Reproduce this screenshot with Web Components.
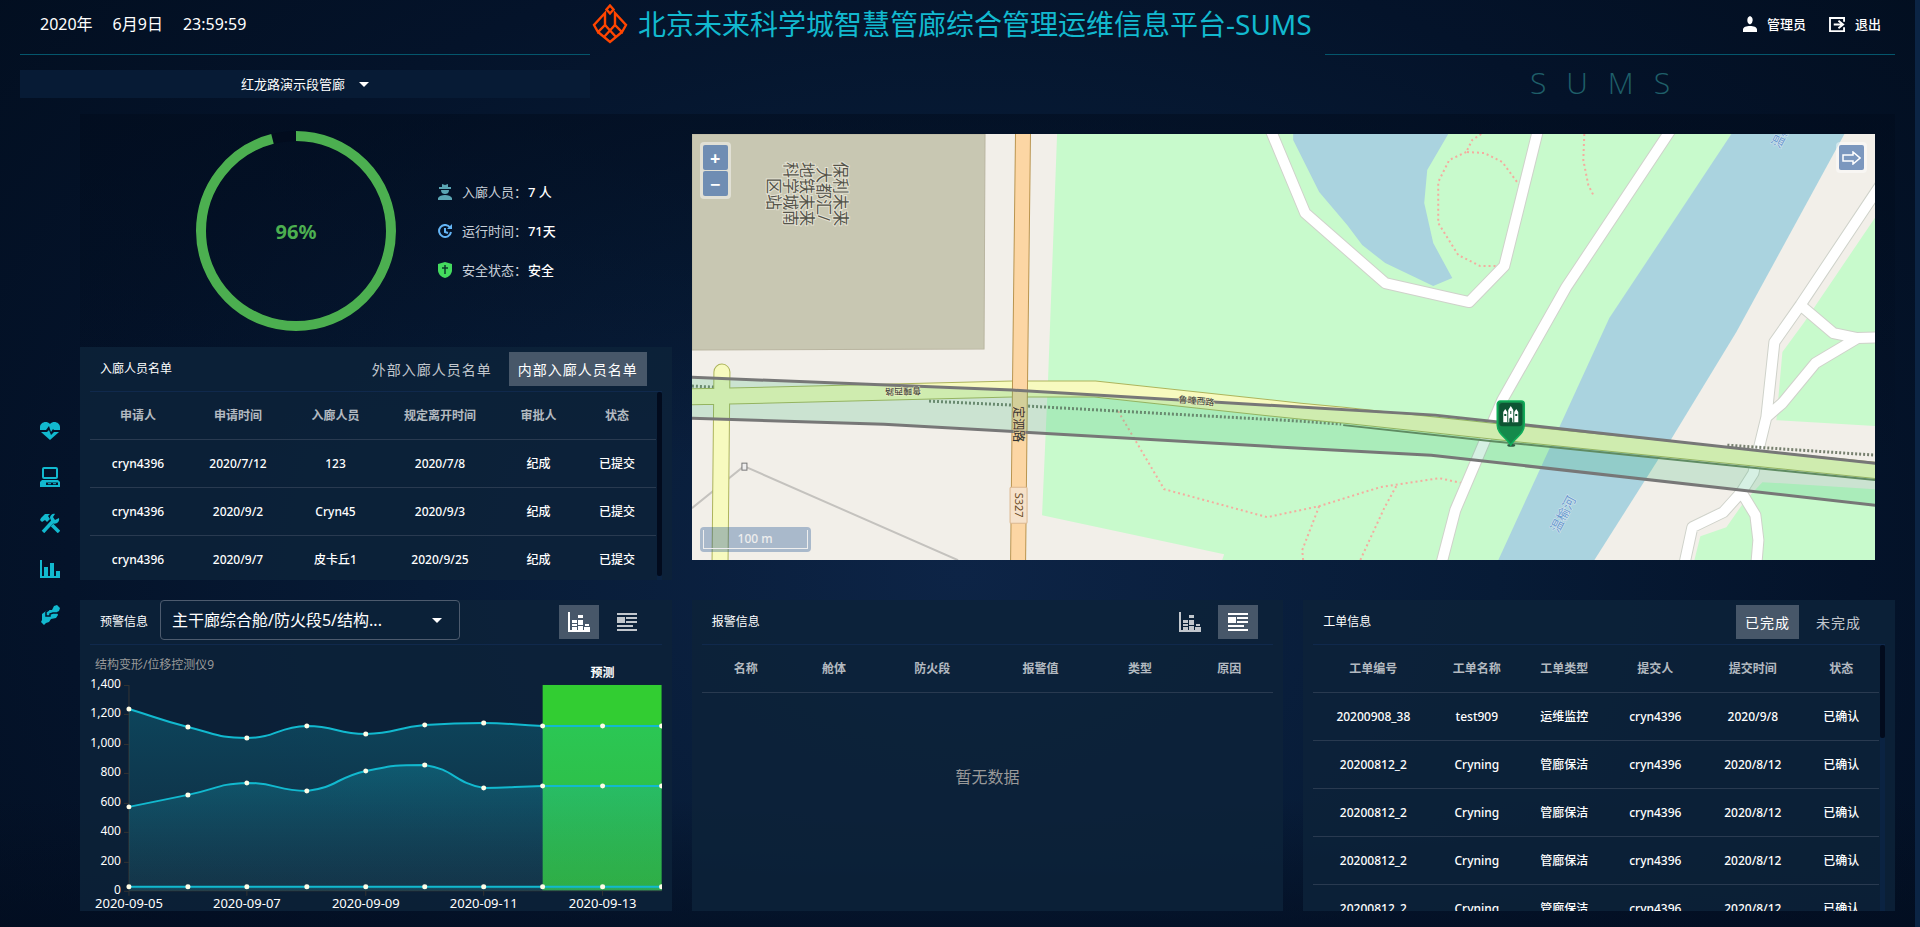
<!DOCTYPE html>
<html lang="zh-CN">
<head>
<meta charset="utf-8">
<title>北京未来科学城智慧管廊综合管理运维信息平台-SUMS</title>
<style>
html, body { margin: 0; min-height: 100%; background: #04132a; }
body { font-family: "Noto Sans", "Noto Sans CJK SC", sans-serif; font-size: 12px; color: #fff; }
</style>
</head>
<body>
<sums-app></sums-app>
<script>
const ICONS = {
  user: ['0 0 16 16', '<path fill="currentColor" d="M8 0a4 4.500 0 0 1 0 8.500A4 4.500 0 0 1 8 0zM1 16v-2.500C1 11 4.500 10 8 10s7 1 7 3.500V16z"/>'],
  exit: ['0 0 18 16', '<path fill="none" stroke="currentColor" stroke-width="2" d="M16 5V1H1v14h15v-4"/><path fill="none" stroke="currentColor" stroke-width="2" d="M5 8h10M10 4l5 4-5 4"/>'],
  heart: ['0 0 20 18', '<path fill="currentColor" d="M0 8V5C0 1 6-2 10 2c4-4 10-1 10 3v3h-6l-1-1-2 3-2-6-3 4zM1 10h6l2-2 2 5 3-3h5l-9 8z"/>'],
  computer: ['0 0 20 20', '<rect x="3" y="1" width="14" height="10" rx="1" fill="none" stroke="currentColor" stroke-width="2"/><path fill="currentColor" fill-rule="evenodd" d="M2 13h16l2 2v5H0v-5zM6 15.500v2.500h12v-2.500z"/><path stroke="currentColor" d="M8 16.700h3M13 16.700h3"/>'],
  tools: ['0 0 20 20', '<path fill="none" stroke="currentColor" stroke-width="3.500" d="M3 19L14 7"/><path fill="currentColor" d="M10 5c0-3 3-5 5-4l-2 3 2 3 4-2c1 4-3 7-7 5zM1 5l4-4h5L8 3l2 3-3 3-2-2-3 2-2-2z"/><path stroke="currentColor" stroke-width="3.500" d="M12 12l7 7"/>'],
  bars: ['0 0 20 18', '<path fill="currentColor" d="M0 0h2v16h2V7h4v9h2V3h4v13h2v-5h4v7H0z"/>'],
  plug: ['0 0 20 20', '<path fill="currentColor" d="M14 1l3-1 3 3-1 3-2 1 1 3-2 3-5 1-2 3-3 1-2 2-3-3 1-2V9l4-3 3-1h3z"/><path fill="none" stroke="#04132a" stroke-width="1.500" d="M9 5L6 7v4h4V9l3-1 5 0"/>'],
  worker: ['0 0 14 16', '<path fill="#5ba6b4" d="M4 0l3 1 3-1v3h3v2H1V3h3zM3 6h8c0 3-2 4-4 4S3 9 3 6zM0 16v-2c1-2 4-3 7-3s6 1 7 3v2z"/>'],
  clock: ['0 0 14 14', '<path fill="none" stroke="#64b5f6" stroke-width="2" d="M12 3.500A6 6 0 1 0 13 8M7 4v4l3 1"/><path fill="#64b5f6" d="M14 0v5H9z"/>'],
  shield: ['0 0 14 16', '<path fill="#44db5e" d="M7 0l7 2v6c0 4-3 7-7 8-4-1-7-4-7-8V2z"/><path stroke="#0b3a2c" stroke-width="1.500" d="M7 3v9M4 6h6"/>'],
  stack: ['0 0 22 20', '<path fill="currentColor" d="M0 0h2v18h20v2H0zM4 8h5v3H4zM4 12h5v2H4zM4 15h5v3H4zM10 3h5v3h-5zM10 8h5v5h-5zM10 14h5v4h-5zM17 12h4v2h-4zM16 15h6v3h-6z"/>'],
  news: ['0 0 20 18', '<path fill="currentColor" d="M0 0h20v2H0zM0 4h8v6H0zM9 4h11v2H9zM9 8h11v2H9zM0 12h16v2H0zM0 16h20v2H0z"/>'],
  caret: ['0 0 10 5', '<path fill="currentColor" d="M0 0h10L5 5z"/>'],
  logo: ['0 0 36 40', '<g fill="none" stroke="#ff4500" stroke-width="2.400"><path d="M18 1.500l3.500 4-3.500 4-3.500-4z"/><path d="M13 9L2 21l4 7 7-7zM23 9l11 12-4 7-7-7z"/><path d="M13 21l11 12M23 21L12 33M6 28l12 10 12-10M18 27"/></g>']
};

/* Shared base: fills an open shadow root with styles and markup. */
class Base extends HTMLElement {
  constructor() { super(); this.attachShadow({ mode: 'open' }); }
  connectedCallback() {
    const t = document.createElement('template');
    t.innerHTML = `<style>*{box-sizing:border-box}:host{display:block;box-sizing:border-box}${this.css()}</style>${this.html()}`;
    this.shadowRoot.replaceChildren(t.content.cloneNode(true));
  }
  css() { return ''; }
  html() { return '<slot></slot>'; }
}

class UiIcon extends Base {
  css() {
    return `:host{display:inline-flex;flex:none}svg{display:block;width:${this.getAttribute('w')}px;height:${this.getAttribute('h')}px}`;
  }
  html() {
    const [box, body] = ICONS[this.getAttribute('name')];
    return `<svg viewBox="${box}" aria-hidden="true">${body}</svg>`;
  }
}
customElements.define('ui-icon', UiIcon);

/* Toggle button: text tab, or icon when a label is given. */
class TabButton extends Base {
  css() {
    return `button{display:flex;align-items:center;justify-content:center;height:34px;min-width:40px;padding:0 9px;margin:0;border:0;
        background:transparent;color:rgba(255,255,255,.75);font:inherit;font-size:14px;letter-spacing:1px;white-space:nowrap}
      :host([active]) button{background:#475769;color:#fff}`;
  }
  html() {
    const on = this.hasAttribute('active');
    const label = this.getAttribute('label');
    return `<button type="button" aria-pressed="${on}" ${label ? `aria-label="${label}"` : ''}><slot></slot></button>`;
  }
}
customElements.define('tab-button', TabButton);

class InfoPanel extends Base {
  css() {
    return `:host{display:flex;flex-direction:column;min-width:0;min-height:0;overflow:hidden;background:rgba(12,34,57,.88)}
      header{display:flex;align-items:center;flex:none;height:45px;margin:0 10px;padding:0 15px 0 10px;border-bottom:1px solid #10294c}
      h2{margin:0;font-size:12px;font-weight:400;line-height:20px}
      .lead{flex:1;align-self:flex-start;padding-left:12px}
      .tools{display:flex;gap:8px}
      .body{flex:1;min-height:0;margin:0 10px;display:flex;flex-direction:column}`;
  }
  html() {
    return `<header><h2>${this.getAttribute('heading')}</h2><div class="lead"><slot name="lead"></slot></div><div class="tools"><slot name="tools"></slot></div></header><div class="body"><slot></slot></div>`;
  }
}
customElements.define('info-panel', InfoPanel);

class DataTable extends Base {
  css() {
    return `:host{display:flex;flex:1;min-height:0;overflow:hidden}
      .view{flex:1;overflow:hidden}
      table{width:100%;table-layout:fixed;border-collapse:separate;border-spacing:0}
      th,td{height:48px;padding:0;text-align:center;font-size:12px;font-weight:500;line-height:18px;border-bottom:1px solid #293a50;white-space:nowrap}
      th{font-weight:600;color:rgba(255,255,255,.7)}
      .track{flex:none;width:5px;margin-left:1px;background:#0b2342}
      .thumb{background:#020b1d;border-radius:2px;height:${this.getAttribute('thumb') || 0}%}
      .empty{margin:0;padding-top:72px;text-align:center;font-size:16px;line-height:24px;color:#999}`;
  }
  html() {
    const get = n => JSON.parse(this.getAttribute(n) || '[]');
    const rows = get('rows');
    return `<div class="view"><table><colgroup>${get('widths').map(w => `<col style="width:${w}px">`).join('')}</colgroup>
      <thead><tr>${get('cols').map(c => `<th scope="col">${c}</th>`).join('')}</tr></thead>
      <tbody>${rows.map(r => `<tr>${r.map(c => `<td>${c}</td>`).join('')}</tr>`).join('')}</tbody></table>
      ${rows.length ? '' : '<p class="empty">暂无数据</p>'}</div>
      ${this.hasAttribute('thumb') ? '<div class="track"><div class="thumb"></div></div>' : ''}`;
  }
}
customElements.define('data-table', DataTable);

class DateBar extends Base {
  css() { return ':host{display:flex;gap:20px;align-items:center;font-size:16px;line-height:24px}'; }
  html() { return '<span>2020年</span><span>6月9日</span><time>23:59:59</time>'; }
}
customElements.define('date-bar', DateBar);

class AppHeader extends Base {
  css() {
    return `:host{display:grid;grid-template-columns:570fr 735fr 570fr}
      .bar{display:flex;align-items:center;height:55px;padding:0 20px 6px;border-bottom:1px solid #04566c}
      .right{justify-content:flex-end;padding-right:14px;gap:23px;font-size:13px}
      .right a{display:flex;align-items:center;gap:9px;color:#fff;text-decoration:none;font-weight:500;line-height:18px}
      .title{display:flex;align-items:center;gap:10px;height:48px;padding-left:2px;color:#12b9cf}
      h1{margin:0;font-size:28px;font-weight:400;line-height:40px;white-space:nowrap}
      .pick{display:flex;align-items:center;justify-content:center;gap:13px;height:28px;margin-top:15px;background:#071b35}
      select{appearance:none;border:0;margin:0;padding:0;background:transparent;color:#fff;font:inherit;font-size:13px;line-height:20px}
      .mark{margin:8px 0 0;text-align:center;font-family:"Open Sans","Noto Sans",sans-serif;font-size:30px;font-weight:300;line-height:40px;letter-spacing:20px;color:#1f5f69;height:35px}`;
  }
  html() {
    return `<div><div class="bar"><date-bar></date-bar></div>
        <div class="pick"><select aria-label="管廊"><option>红龙路演示段管廊</option></select><ui-icon name="caret" w="10" h="5"></ui-icon></div></div>
      <div class="title"><ui-icon name="logo" w="36" h="40"></ui-icon><h1>北京未来科学城智慧管廊综合管理运维信息平台-SUMS</h1></div>
      <div><div class="bar right"><a href="#user"><ui-icon name="user" w="16" h="16"></ui-icon>管理员</a><a href="#exit"><ui-icon name="exit" w="17" h="15"></ui-icon>退出</a></div>
        <p class="mark">SUMS</p></div>`;
  }
}
customElements.define('app-header', AppHeader);

class SideNav extends Base {
  css() { return `nav{display:flex;flex-direction:column;align-items:center;padding-top:307px;gap:26px}a{display:flex;align-items:center;justify-content:center;width:20px;height:20px;color:#12b9cf}`; }
  html() {
    return `<nav>${[['heart', 18, '健康监测'], ['computer', 20, '设备'], ['tools', 20, '运维'], ['bars', 18, '统计'], ['plug', 20, '应急']]
      .map(([n, h, l]) => `<a href="#${n}" aria-label="${l}"><ui-icon name="${n}" w="20" h="${h}"></ui-icon></a>`).join('')}</nav>`;
  }
}
customElements.define('side-nav', SideNav);

class StatusCard extends Base {
  css() {
    return `:host{display:flex;align-items:center;justify-content:center;gap:42px}
      svg{display:block;width:200px;height:200px}
      dl{margin:0}
      dl div{display:flex;align-items:center;height:39px;font-size:13px;line-height:20px}
      ui-icon{width:15px;margin-right:9px}
      dt{color:#c9d0d9}dd{margin:0 0 0 1px;font-weight:500}`;
  }
  html() {
    const row = (i, h, k, v) => `<div><ui-icon name="${i}" w="14" h="${h}"></ui-icon><dt>${k}：</dt><dd>${v}</dd></div>`;
    return `<svg viewBox="0 0 200 200" role="img" aria-label="96%">
        <circle cx="100" cy="100" r="95" fill="none" stroke="#020c1e" stroke-width="10"/>
        <circle cx="100" cy="100" r="95" fill="none" stroke="#4caf50" stroke-width="10" pathLength="100" stroke-dasharray="96 4" transform="rotate(-90 100 100)"/>
        <text x="100" y="108" text-anchor="middle" font-size="20" font-weight="700" fill="#4caf50">96%</text></svg>
      <dl>${row('worker', 16, '入廊人员', '7 人')}${row('clock', 14, '运行时间', '71天')}${row('shield', 16, '安全状态', '安全')}</dl>`;
  }
}
customElements.define('status-card', StatusCard);

class SiteMap extends Base {
  css() {
    return `:host{position:relative;overflow:hidden;background:#f2efe9}
      svg.map{position:absolute;inset:0;width:100%;height:100%;display:block}
      .ctl{position:absolute;top:8px;padding:3px;border-radius:4px;background:rgba(255,255,255,.45);display:grid;gap:1px}
      .zoom{left:8px}.over{right:8px}
      button{display:flex;align-items:center;justify-content:center;width:25px;height:25px;margin:0;padding:0;border:0;border-radius:2px;background:#6f8db3;color:#fff;font:inherit;font-size:18px;font-weight:700;line-height:20px}
      .over button{background:#7b97be}
      .scale{position:absolute;left:8px;bottom:8px;padding:3px;width:111px;border-radius:4px;background:rgba(0,60,136,.3)}
      .scale div{height:19px;border:1px solid #eee;border-top:0;color:#eee;text-align:center;font-size:12px;font-weight:500;line-height:18px}`;
  }
  html() {
    const yellow = 'M-15 263L37 262 320 255 403 255 608 277 651 281 800 297 1190 337M30 238L28 440';
    const roads = ['M578-5L588 19 613 79 693 149 759 164 777 168 812 132 846-5',
      'M979-5L874 153 810 266 792 308 763 376 749 430',
      'M1190 48L1108 171 1082 208 1074 283 1066 316 1061 339 1049 358 1031 378 1000 393 992 430',
      'M1049 358L1063 381 1066 406 1064 430', 'M1108 171L1141 199 1165 204 1190 203', 'M1165 204L1123 229 1090 269 1074 283'].join('');
    return `<svg class="map" viewBox="0 0 1183 426" preserveAspectRatio="xMidYMid slice" role="img" aria-label="地图">
      <rect width="1183" height="426" fill="#f2efe9"/>
      <path d="M0 0H293L292 215 0 216z" fill="#c8c7b2" stroke="#b9b5a0"/>
      <path d="M365 0H1100L980 303 900 426H530L532 420 350 381 356 245z" fill="#c8facc"/>
      <path d="M1152 0H1183V426H902L980 303 1044 198z" fill="#f2efe9"/>
      <path d="M1183 83L1112 188 1090 218 1084 286 1183 292zM1070 348L1183 355V426H1002L1008 402 1034 393 1053 366z" fill="#c8facc"/>
      <path d="M1039 0H1152L1044 198 980 303 902 426H806L867 293 917 184z" fill="#aad3df"/>
      <path d="M601 0V6L627 58 655 91 670 111 693 129 741 152 760 144 741 109 732 69 735 36 756 0z" fill="#aad3df"/>
      <path d="M0 374L52 332 266 426" fill="none" stroke="#c4c2be" stroke-width="2"/>
      <rect x="50" y="329" width="5" height="7" fill="#eee" stroke="#777"/>
      <g fill="none" stroke="#f4ac9f" stroke-width="2" stroke-dasharray="2 3">
        <path d="M426 277L472 355 575 383 627 372 688 353 747 344 770 349M704 352L692 374 668 426M627 372L610 416 611 426M789 0L780 6 774 18 792 19 810 28 827 51M774 18L757 26 746 48V89L766 121 788 132H804M892 0L891 26 896 51 902 63"/></g>
      <path d="${roads}" fill="none" stroke="#cfd2ca" stroke-width="12" stroke-linejoin="round"/>
      <path d="${roads}" fill="none" stroke="#fff" stroke-width="10" stroke-linejoin="round"/>
      <g fill="none" stroke="#77806f" stroke-width="3" stroke-dasharray="2 2"><path d="M0 252L23 253M237 267L320 271M336 272L608 287 649 290M1035 311L1078 314 1183 321"/></g>
      <g fill="none" stroke-linecap="round"><path d="${yellow}" stroke="#adb45c" stroke-width="17"/><path d="${yellow}" stroke="#f7fabf" stroke-width="15"/></g>
      <path d="M331-5L328 245 326 430" fill="none" stroke="#ba9550" stroke-width="16"/>
      <path d="M331-5L328 245 326 430" fill="none" stroke="#fcd6a4" stroke-width="14"/>
      <path d="M0 243L320 256 608 273 743 281 1183 329V371L739 321 608 314 192 290 0 284z" fill="rgba(50,180,115,.2)"/>
      <g fill="none" stroke="#777" stroke-width="3"><path d="M-5 243L320 256 608 273 743 281 1190 330"/><path d="M-5 284L192 290 608 314 739 321 1190 372"/></g>
      <path d="M651 291L800 307 1183 346" fill="none" stroke="#5f8b62" stroke-width="2"/>
      <rect x="318" y="353" width="17" height="36" rx="1" fill="#f6e2cb" stroke="#dcb890"/>
      <text transform="translate(323 371) rotate(90)" font-size="11" fill="#6b4a1f" text-anchor="middle">S327</text>
      <g font-size="16" fill="#55544a" stroke="#e4e2d4" stroke-width="2" paint-order="stroke" text-anchor="middle">
        <text transform="translate(143 60) rotate(90)">保利未来</text><text transform="translate(126 60) rotate(90)">大都汇/</text>
        <text transform="translate(109 60) rotate(90)">地铁未来</text><text transform="translate(93 60) rotate(90)">科学城南</text><text transform="translate(76 60) rotate(90)">区站</text></g>
      <g font-size="9" fill="#333" stroke="#eef2c0" stroke-width="1" paint-order="stroke" text-anchor="middle">
        <text transform="translate(211 254) rotate(179)">鲁疃西路</text><text transform="translate(504 270) rotate(5)">鲁疃西路</text></g>
      <text transform="translate(322 290) rotate(90)" font-size="12" fill="#333" stroke="#e0c890" stroke-width="1" paint-order="stroke" text-anchor="middle">定泗路</text>
      <g font-size="13" fill="#6b9bd0" stroke="#d8e6ee" stroke-width="1" paint-order="stroke" text-anchor="middle">
        <text transform="translate(875 382) rotate(-62)">温榆河</text><text transform="translate(1096 -2) rotate(-62)">温榆河</text></g>
      <g transform="translate(804 266)"><ellipse cx="15" cy="45" rx="4" ry="1.500" fill="#2a5c41"/>
        <path d="M4 1H25a3 3 0 0 1 3 3V25C28 34 18 38 14.500 45 11 38 1 34 1 25V4a3 3 0 0 1 3-3z" fill="#148a4b" stroke="#0fae5a" stroke-width="1.500"/>
        <rect x="3" y="3" width="23" height="23" rx="3" fill="#0d5533"/>
        <path fill="#fff" d="M7 22V12l2-3 2 3v1h1V10l2.500-4L17 10v3h1v-1l2-3 2 3V22H16V19a1.500 1.500 0 0 0-3 0V22z"/>
        <path fill="#0d5533" d="M8 14h2v2H8zM19 14h2v2h-2zM14 11h1v3h-1zM11 13h1v9h-1zM17 13h1v9h-1z"/></g>
      </svg>
      <div class="ctl zoom"><button type="button" aria-label="放大">+</button><button type="button" aria-label="缩小">−</button></div>
      <div class="ctl over"><button type="button" aria-label="展开"><svg width="19" height="14" viewBox="0 0 19 14"><path d="M1 4h10V1l7 6-7 6v-3H1z" fill="none" stroke="#fff" stroke-width="1.500"/></svg></button></div>
      <div class="scale"><div>100 m</div></div>`;
  }
}
customElements.define('site-map', SiteMap);

class TrendChart extends Base {
  css() { return ':host{flex:1;min-height:0}svg{display:block;width:100%;height:100%}'; }
  html() {
    const xs = [39, 98, 157, 217, 276, 335, 394, 453, 513, 572];
    const series = [[64, 82, 93, 81, 89, 80, 78, 81, 81, 81], [162, 150, 138, 146, 126, 120, 143, 141, 141, 141], Array(10).fill(242)];
    const curve = ys => {
      const clamp = (v, a, b) => Math.max(Math.min(a, b), Math.min(Math.max(a, b), v));
      let d = `M${xs[0]} ${ys[0]}`;
      for (let i = 0; i < 9; i++) {
        const s0 = i ? (ys[i + 1] - ys[i - 1]) / 4 : 0;
        const s1 = i < 8 ? (ys[i + 2] - ys[i]) / 4 : 0;
        const w = (xs[i + 1] - xs[i]) / 2;
        d += `C${xs[i] + w} ${i ? clamp(ys[i] + s0, ys[i], ys[i + 1]) : ys[i] + (ys[1] - ys[0]) / 2} ${xs[i + 1] - w} ${clamp(ys[i + 1] - s1, ys[i], ys[i + 1])} ${xs[i + 1]} ${ys[i + 1]}`;
      }
      return d;
    };
    let yl = '';
    ['1,400', '1,200', '1,000', '800', '600', '400', '200', '0'].forEach((t, i) => {
      const y = Math.round(40 + i * 206 / 7);
      yl += `<text x="31" y="${y + 3}" text-anchor="end">${t}</text><path d="M34 ${y}.5h5" stroke="#333"/>`;
    });
    const xl = [5, 7, 9, 11, 13].map((n, i) => `<text x="${xs[i * 2]}" y="263" font-size="13" text-anchor="middle">2020-09-${String(n).padStart(2, '0')}</text><path d="M${xs[i * 2]} 246v5" stroke="#333"/>`).join('');
    return `<svg viewBox="0 0 572 266" preserveAspectRatio="xMinYMin meet" role="img" aria-label="结构变形/位移控测仪9">
      <defs><linearGradient id="g" x1="0" y1="0" x2="0" y2="1"><stop offset="0" stop-color="rgba(18,185,207,.24)"/><stop offset="1" stop-color="rgba(40,100,115,.16)"/></linearGradient></defs>
      <g font-size="12" fill="#fff">
      <rect x="453" y="40" width="119" height="206" fill="#32cd32"/>
      <path d="M39 40V246H572" fill="none" stroke="#333"/>
      ${series.map(s => `<path d="${curve(s)}V246H39z" fill="url(#g)"/>`).join('')}
      ${series.map(s => `<path d="${curve(s)}" fill="none" stroke="#12b9cf" stroke-width="2"/>`).join('')}
      ${series.map(s => s.map((y, i) => `<circle cx="${xs[i]}" cy="${y}" r="2.500" fill="#fffde7"/>`).join('')).join('')}
      ${yl}${xl}
      <text x="5" y="24" fill="#999">结构变形/位移控测仪9</text>
      <text x="513" y="32" text-anchor="middle" font-weight="700">预测</text></g></svg>`;
  }
}
customElements.define('trend-chart', TrendChart);

class SectionSelect extends Base {
  css() {
    return `label{position:relative;display:block;max-width:300px}
      select{appearance:none;display:block;width:100%;height:40px;margin:0;padding:0 36px 0 11px;border:1px solid #4d5b6e;border-radius:4px;background:transparent;color:#fff;font:inherit;font-size:16px;line-height:24px;text-overflow:ellipsis}
      ui-icon{position:absolute;right:18px;top:18px;pointer-events:none}`;
  }
  html() { return `<label><select aria-label="监测位置"><option>主干廊综合舱/防火段5/结构...</option></select><ui-icon name="caret" w="10" h="5"></ui-icon></label>`; }
}
customElements.define('section-select', SectionSelect);

class SumsApp extends Base {
  css() {
    return `:host{display:flex;flex-direction:column;height:100vh;min-height:900px;padding:0 25px 16px 20px;position:relative;
        background:linear-gradient(#0000 86%,rgba(2,12,30,.6)),radial-gradient(ellipse 62% 92% at 50% 62%,#0d2446 0%,#071b36 45%,#04132a 75%,#020e1f 110%)}
      .edge{position:absolute;top:0;right:0;bottom:0;width:5px;background:#0b2444}
      .page{flex:1;min-height:0;display:grid;grid-template-columns:60px minmax(0,1fr);grid-template-rows:minmax(0,1fr);margin-top:16px}
      main{display:grid;grid-template-rows:minmax(0,3fr) minmax(0,2fr);gap:20px;min-width:0;min-height:0}
      .top,.bottom{display:grid;grid-template-columns:repeat(3,minmax(0,1fr));grid-template-rows:minmax(0,1fr);gap:20px;min-height:0}
      .top{background:linear-gradient(rgba(1,11,27,.5),rgba(1,11,27,0) 75%)}
      .people{display:grid;grid-template-rows:minmax(0,1fr) minmax(0,1fr);min-height:0}
      site-map{grid-column:span 2;margin:20px 20px 20px 0}`;
  }
  html() {
    const j = v => `'${JSON.stringify(v)}'`;
    const order = ['20200812_2', 'Cryning', '管廊保洁', 'cryn4396', '2020/8/12', '已确认'];
    return `<div class="edge"></div><app-header></app-header>
      <div class="page"><side-nav></side-nav><main>
        <div class="top"><div class="people"><status-card></status-card>
          <info-panel heading="入廊人员名单"><tab-button slot="tools">外部入廊人员名单</tab-button><tab-button slot="tools" active>内部入廊人员名单</tab-button>
            <data-table thumb="98" widths=${j([96, 104, 91, 118, 79, 78])} cols=${j(['申请人', '申请时间', '入廊人员', '规定离开时间', '审批人', '状态'])}
              rows=${j([['cryn4396', '2020/7/12', '123', '2020/7/8', '纪成', '已提交'], ['cryn4396', '2020/9/2', 'Cryn45', '2020/9/3', '纪成', '已提交'], ['cryn4396', '2020/9/7', '皮卡丘1', '2020/9/25', '纪成', '已提交']])}></data-table></info-panel></div>
          <site-map></site-map></div>
        <div class="bottom">
          <info-panel heading="预警信息"><section-select slot="lead"></section-select>
            <tab-button slot="tools" active label="图表"><ui-icon name="stack" w="22" h="20"></ui-icon></tab-button><tab-button slot="tools" label="列表"><ui-icon name="news" w="20" h="18"></ui-icon></tab-button>
            <trend-chart></trend-chart></info-panel>
          <info-panel heading="报警信息">
            <tab-button slot="tools" label="图表"><ui-icon name="stack" w="22" h="20"></ui-icon></tab-button><tab-button slot="tools" active label="列表"><ui-icon name="news" w="20" h="18"></ui-icon></tab-button>
            <data-table widths=${j([88, 88, 108, 108, 90, 88])} cols=${j(['名称', '舱体', '防火段', '报警值', '类型', '原因'])}></data-table></info-panel>
          <info-panel heading="工单信息"><tab-button slot="tools" active>已完成</tab-button><tab-button slot="tools">未完成</tab-button>
            <data-table thumb="35" widths=${j([120, 87, 88, 94, 101, 76])} cols=${j(['工单编号', '工单名称', '工单类型', '提交人', '提交时间', '状态'])}
              rows=${j([['20200908_38', 'test909', '运维监控', 'cryn4396', '2020/9/8', '已确认'], order, order, order, order])}></data-table></info-panel>
        </div></main></div>`;
  }
}
customElements.define('sums-app', SumsApp);
</script>
</body>
</html>
